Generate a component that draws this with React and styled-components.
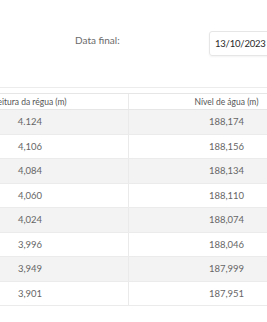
import React from 'react';
import styled, { createGlobalStyle } from 'styled-components';

const GlobalStyle = createGlobalStyle`
  html, body {
    margin: 0;
    padding: 0;
    background: #ffffff;
    overflow: hidden;
  }
  body {
    font-family: Lato, "Open Sans", sans-serif;
  }
`;

const rows = [
  ['4.124', '188,174'],
  ['4,106', '188,156'],
  ['4,084', '188,134'],
  ['4,060', '188,110'],
  ['4,024', '188,074'],
  ['3,996', '188,046'],
  ['3,949', '187,999'],
  ['3,901', '187,951'],
];

const App = () => {
  return (
    <>
      <GlobalStyle />
      <Page>
        <Filters>
          <Label>Data final:</Label>
          <DateInput>13/10/2023 15:00</DateInput>
        </Filters>
        <Table>
          <HeadRow>
            <HeadCell>Leitura da régua (m)</HeadCell>
            <HeadCell>Nível de água (m)</HeadCell>
          </HeadRow>
          {rows.map((r, i) => (
            <Row key={i} $striped={i % 2 === 0}>
              <Cell>{r[0]}</Cell>
              <Cell>{r[1]}</Cell>
            </Row>
          ))}
        </Table>
      </Page>
    </>
  );
};

const Page = styled.div`
  width: 267px;
  height: 322px;
  overflow: hidden;
`;

const Filters = styled.div`
  height: 88px;
  box-sizing: border-box;
  border-bottom: 1px solid #ececec;
  display: flex;
  align-items: center;
  padding-left: 75px;
  padding-bottom: 6px;
`;

const Label = styled.span`
  flex: none;
  font-size: 10px;
  color: #6a6a6a;
  width: 134px;
  margin-top: -2px;
`;

const DateInput = styled.div`
  flex: none;
  width: 110px;
  height: 25px;
  box-sizing: border-box;
  border: 1px solid #e6e6e6;
  border-radius: 3px;
  box-shadow: 0 1px 2px rgba(0, 0, 0, 0.05);
  padding-left: 5px;
  display: flex;
  align-items: center;
  font-size: 9.5px;
  letter-spacing: -0.2px;
  color: #2a2a2a;
  white-space: nowrap;
  margin-top: 5px;
`;

const Table = styled.div`
  margin-top: 5px;
  margin-left: -68px;
  width: 392px;
  border-top: 1px solid #e6e6e6;
`;

const HeadRow = styled.div`
  display: grid;
  grid-template-columns: 196px 196px;
  height: 15px;
  border-bottom: 1px solid #e6e6e6;
`;

const HeadCell = styled.div`
  display: flex;
  align-items: center;
  justify-content: center;
  font-size: 8.5px;
  color: #555555;
  & + & {
    border-left: 1px solid #eaeaea;
  }
`;

const Row = styled.div`
  display: grid;
  grid-template-columns: 196px 196px;
  height: 24.5px;
  box-sizing: border-box;
  background: ${(p) => (p.$striped ? '#f3f3f3' : '#ffffff')};
  border-bottom: 1px solid #ebebeb;
`;

const Cell = styled.div`
  display: flex;
  align-items: center;
  justify-content: center;
  font-size: 9.5px;
  color: #666666;
  & + & {
    border-left: 1px solid #eaeaea;
  }
`;

export default App;
